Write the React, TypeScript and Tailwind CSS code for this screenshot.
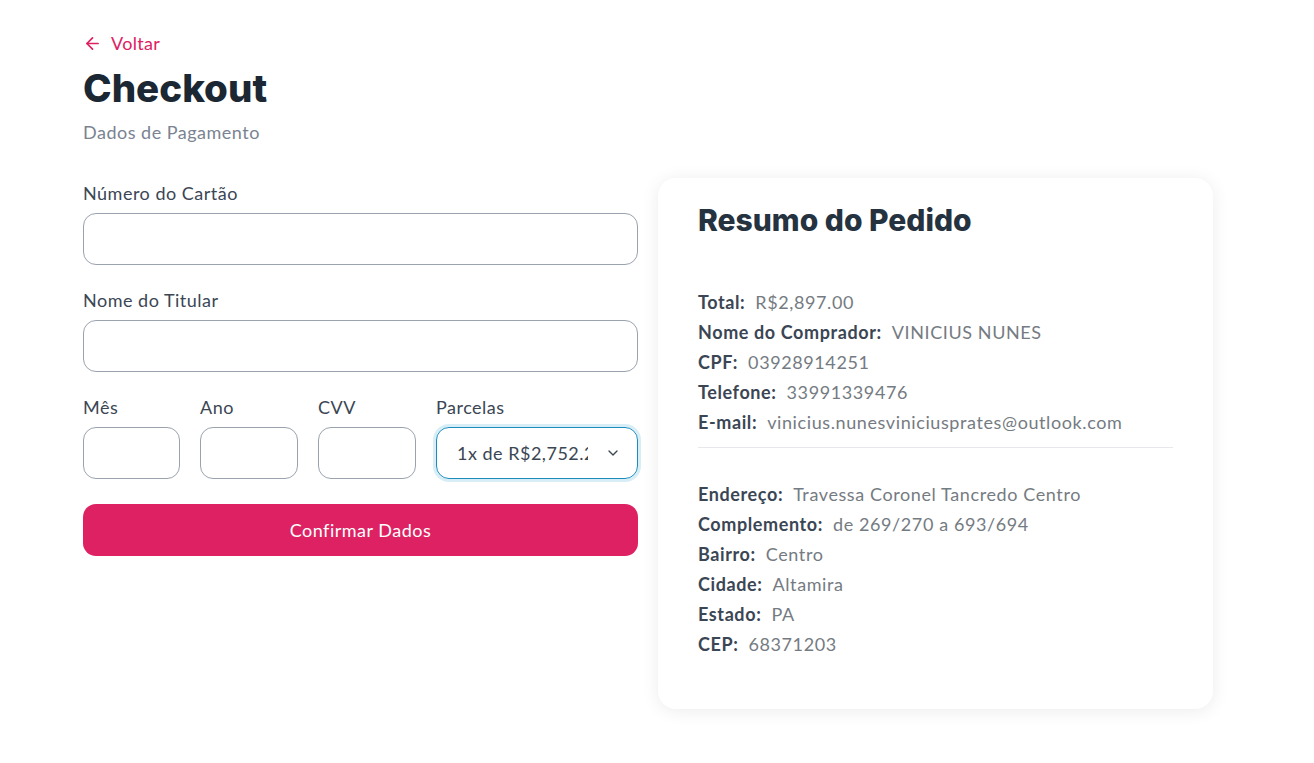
import React from "react";
import { ArrowLeft, ChevronDown } from "lucide-react";

const body = { fontFamily: "Lato, 'Noto Sans', sans-serif" };
const head = { fontFamily: "Inter, 'Noto Sans', sans-serif" };

function Row({ k, v }: { k: string; v: string }) {
  return (
    <div className="h-[30px] flex items-center text-[18px] tracking-[0.6px]">
      <span className="font-bold text-[#3b4654]">{k}:</span>
      <span className="ml-[10px] text-[#757b82]">{v}</span>
    </div>
  );
}

export default function App() {
  return (
    <div className="min-h-screen bg-white pl-[83px] pt-[30px]" style={body}>
      <div className="w-[1130px]">
        <div className="flex items-center gap-[9px] text-[#dd2163] text-[18px] h-[26px] tracking-[0.3px]">
          <ArrowLeft size={19} strokeWidth={2.2} />
          <span>Voltar</span>
        </div>
        <h1 className="text-[38.5px] font-extrabold text-[#1b2733] leading-[48px] mt-[8px]" style={head}>
          Checkout
        </h1>
        <p className="text-[18px] text-[#7a8391] mt-[8px] leading-[24px] tracking-[0.5px]">Dados de Pagamento</p>

        <div className="grid grid-cols-[555px_555px] gap-[20px] mt-[25px] tracking-[0.5px]">
          <div className="flex flex-col">
            <label className="text-[18px] text-[#3b4654] mt-[12px] leading-[24px]">Número do Cartão</label>
            <div className="mt-[8px] h-[52px] rounded-[13px] border border-[#9aa3ad]" />
            <label className="text-[18px] text-[#3b4654] mt-[23px] leading-[24px]">Nome do Titular</label>
            <div className="mt-[8px] h-[52px] rounded-[13px] border border-[#9aa3ad]" />
            <div className="grid grid-cols-[97px_98px_98px_202px] gap-[20px] mt-[23px]">
              {["Mês", "Ano", "CVV"].map((l) => (
                <div key={l} className="flex flex-col">
                  <label className="text-[18px] text-[#3b4654] leading-[24px]">{l}</label>
                  <div className="mt-[8px] h-[52px] rounded-[13px] border border-[#9aa3ad]" />
                </div>
              ))}
              <div className="flex flex-col">
                <label className="text-[18px] text-[#3b4654] leading-[24px]">Parcelas</label>
                <div className="mt-[8px] h-[52px] rounded-[13px] border border-[#1b8cbd] ring-[3px] ring-[#d7eef6] flex items-center pl-[20px] pr-[16px]">
                  <div className="w-[131px] overflow-hidden whitespace-nowrap text-[18px] text-[#3b4654]">1x de R$2,752.20</div>
                  <ChevronDown size={16} strokeWidth={2} className="ml-auto text-[#3b4654]" />
                </div>
              </div>
            </div>
            <button className="mt-[25px] h-[52px] rounded-[13px] bg-[#dd2163] text-white text-[18px]">Confirmar Dados</button>
          </div>

          <div className="mt-[9px] rounded-[18px] bg-white shadow-[0_2px_18px_rgba(0,0,0,0.08)] px-[40px] pt-[23px] pb-[50px] h-[531px]">
            <h2 className="text-[30px] font-extrabold text-[#253240] leading-[38px] tracking-normal" style={head}>Resumo do Pedido</h2>
            <div className="mt-[48px]">
              <Row k="Total" v="R$2,897.00" />
              <Row k="Nome do Comprador" v="VINICIUS NUNES" />
              <Row k="CPF" v="03928914251" />
              <Row k="Telefone" v="33991339476" />
              <Row k="E-mail" v="vinicius.nunesviniciusprates@outlook.com" />
            </div>
            <div className="border-t border-[#e6e8eb] mt-[10px]" />
            <div className="mt-[31px]">
              <Row k="Endereço" v="Travessa Coronel Tancredo Centro" />
              <Row k="Complemento" v="de 269/270 a 693/694" />
              <Row k="Bairro" v="Centro" />
              <Row k="Cidade" v="Altamira" />
              <Row k="Estado" v="PA" />
              <Row k="CEP" v="68371203" />
            </div>
          </div>
        </div>
      </div>
    </div>
  );
}
